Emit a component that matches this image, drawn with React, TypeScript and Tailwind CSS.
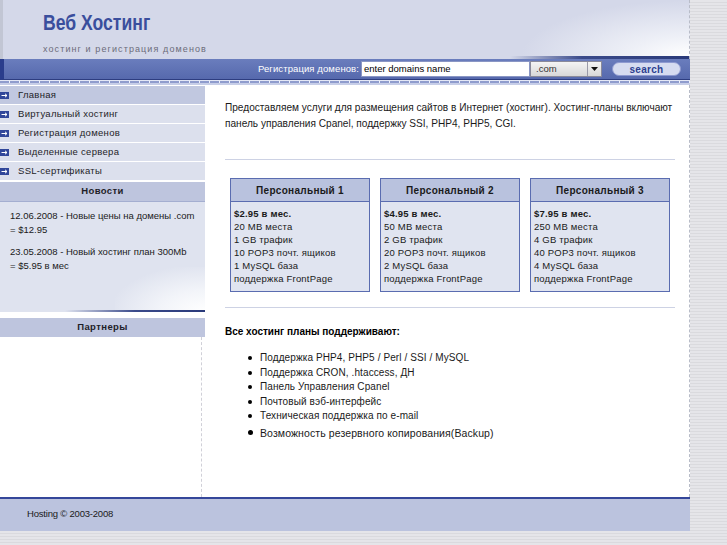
import React from "react";

const menu = ["Главная", "Виртуальный хостинг", "Регистрация доменов", "Выделенные сервера", "SSL-сертификаты"];

const plans = [
    { name: "Персональный 1", price: "$2.95 в мес.", disk: "20 MB места", traffic: "1 GB трафик", pop: "10 POP3 почт. ящиков", db: "1 MySQL база" },
    { name: "Персональный 2", price: "$4.95 в мес.", disk: "50 MB места", traffic: "2 GB трафик", pop: "20 POP3 почт. ящиков", db: "2 MySQL база" },
    { name: "Персональный 3", price: "$7.95 в мес.", disk: "250 MB места", traffic: "4 GB трафик", pop: "40 POP3 почт. ящиков", db: "4 MySQL база" },
];

const features = [
    "Поддержка PHP4, PHP5 / Perl / SSI / MySQL",
    "Поддержка CRON, .htaccess, ДН",
    "Панель Управления Cpanel",
    "Почтовый вэб-интерфейс",
    "Техническая поддержка по e-mail",
];

function MenuArrow() {
    return (
        <svg width="9" height="7" viewBox="0 0 9 7" className="shrink-0">
            <rect width="9" height="7" fill="#31479a"/>
            <path d="M1.5 3.5H7M5 1.8L7 3.5L5 5.2" stroke="#fff" strokeWidth="1" fill="none"/>
        </svg>
    );
}

function App() {
    return (
        <div className="w-[727px] h-[545px] overflow-hidden flex font-['Liberation_Sans',Arial,sans-serif] text-[#1a1a1a] bg-[repeating-linear-gradient(0deg,#e5e5e9_0px,#e5e5e9_2px,#dadade_2px,#dadade_3px)]">
            <div className="w-[690px] flex flex-col">
                {/* Header */}
                <div className="relative h-[59px] bg-[#d4d8e9] border-l-[3px] border-[#c2c6d4] overflow-hidden">
                    <div className="absolute right-0 top-0 w-[170px] h-[59px] bg-[radial-gradient(ellipse_at_100%_95%,#ffffff_0%,#eef0f7_25%,#d4d8e9_70%)]"/>
                    <div className="absolute right-0 bottom-0 w-[180px] h-[3px] bg-[linear-gradient(90deg,#d4d8e9,#3a4a8a_40%,#2a3a7a)]"/>
                    <div className="absolute right-0 top-0 h-[59px] border-r border-dashed border-[#b8bcc8]"/>
                    <div className="relative pl-[40px] pt-[9px]">
                        <div className="inline-block origin-left scale-x-[0.8] text-[22px] font-bold leading-[28px] text-[#3a4e9d]">Веб Хостинг</div>
                        <div className="mt-[6px] text-[9px] leading-[12px] tracking-[1.1px] text-[#6c6c7a]">хостинг и регистрация доменов</div>
                    </div>
                </div>

                {/* Nav bar */}
                <div className="h-[21px] flex items-center bg-[linear-gradient(180deg,#6a7dbd,#5669ad)] border-b border-[#2d3d80] border-l-[4px] border-l-[#2a3d8c]">
                    <div className="flex-1 text-right pr-[2px] text-[9.5px] tracking-[0.1px] text-white">Регистрация доменов:</div>
                    <div className="w-[169px] h-[16px] bg-white border border-[#8a96c4] flex items-center pl-[2px] text-[9.5px] text-black">enter domains name</div>
                    <div className="w-[72px] h-[16px] flex bg-[linear-gradient(180deg,#f4f4f4,#d8d8d8)] border border-[#8a8a9a]">
                        <div className="flex-1 flex items-center pl-[5px] text-[9.5px] text-[#333]">.com</div>
                        <div className="w-[14px] border-l border-[#9a9aa8] flex items-center justify-center">
                            <svg width="7" height="4" viewBox="0 0 7 4"><path d="M0 0H7L3.5 4Z" fill="#111"/></svg>
                        </div>
                    </div>
                    <div className="ml-[10px] mr-[9px] w-[69px] h-[14px] rounded-full bg-[#d6dcf0] border border-[#8e9ad0] flex items-center justify-center text-[10px] font-bold tracking-[0.3px] text-[#2c3f8f]">search</div>
                </div>
                <div className="h-[5px] bg-[#cdd3ea] flex flex-col">
                    <div className="h-[1px] bg-[#e4e8f6]"/>
                    <div className="h-[2px] bg-[repeating-linear-gradient(90deg,#8f9ccd_0px,#8f9ccd_9px,#eef1fa_9px,#eef1fa_10px)]"/>
                    <div className="h-[2px] bg-[#c7cee8]"/>
                </div>

                {/* Body */}
                <div className="h-[412px] flex bg-white">
                    {/* Sidebar */}
                    <div className="w-[205px] shrink-0 flex flex-col">
                        <div className="mt-[1px] flex flex-col">
                            {menu.map((m, i) => (
                                <div key={m} className={`h-[19px] flex items-center gap-[9px] border-b border-white ${i === 0 ? "bg-[#c1c8e0]" : "bg-[#dce0ed]"}`}>
                                    <MenuArrow/>
                                    <span className="text-[9.5px] tracking-[0.3px] text-[#1e1e28]">{m}</span>
                                </div>
                            ))}
                        </div>
                        <div className="mt-[1px] h-[20px] bg-[#bec5de] border-b border-[#a4aed0] flex items-center justify-center text-[9.5px] font-bold tracking-[0.4px] text-[#1e1e28]">Новости</div>
                        <div className="relative h-[110px] bg-[#dfe3ef] pl-[10px] pt-[7px] text-[9.5px] leading-[14px] whitespace-nowrap overflow-hidden">
                            <div className="absolute right-0 bottom-0 w-[90px] h-[45px] bg-[radial-gradient(ellipse_at_100%_100%,#ffffff_0%,#f2f4f9_35%,#dfe3ef_75%)]"/>
                            <div className="absolute right-0 bottom-0 w-[140px] h-[2px] bg-[linear-gradient(90deg,#dfe3ef,#3a4a8a_50%,#2a3a7a)]"/>
                            <p className="relative mb-[8px]">12.06.2008 - Новые цены на домены .com<br/>= $12.95</p>
                            <p className="relative">23.05.2008 - Новый хостинг план 300Mb<br/>= $5.95 в мес</p>
                        </div>
                        <div className="h-[6px] bg-white"/>
                        <div className="h-[19px] bg-[#bec5de] flex items-center justify-center text-[9.5px] font-bold tracking-[0.4px] text-[#1e1e28]">Партнеры</div>
                        <div className="flex-1 border-r border-dashed border-[#d0d0d8] mr-[3px]"/>
                    </div>

                    {/* Main */}
                    <div className="flex-1 min-w-0 pl-[20px] pr-[14px] pt-[15px] border-r border-dashed border-[#b8bcc8]">
                        <p className="text-[10.1px] leading-[16px] whitespace-nowrap text-[#1a1a1a]">
                            Предоставляем услуги для размещения сайтов в Интернет (хостинг). Хостинг-планы включают<br/>
                            панель управления Cpanel, поддержку SSI, PHP4, PHP5, CGI.
                        </p>
                        <div className="mt-[27px] h-[1px] bg-[#cdd2e4]"/>

                        <div className="mt-[18px] mx-[5px] grid grid-cols-3 gap-[10px]">
                            {plans.map(p => (
                                <div key={p.name} className="border border-[#5a6cb0] bg-[#e0e4f0]">
                                    <div className="h-[23px] bg-[#b9c2de] border-b border-[#5a6cb0] flex items-center justify-center text-[10px] font-bold tracking-[0.3px] text-[#1a1a1a]">{p.name}</div>
                                    <div className="pl-[3px] pt-[5px] pb-[6px] text-[9.5px] leading-[13px] tracking-[0.2px] text-[#1a1a1a]">
                                        <div className="font-bold">{p.price}</div>
                                        <div>{p.disk}</div>
                                        <div>{p.traffic}</div>
                                        <div>{p.pop}</div>
                                        <div>{p.db}</div>
                                        <div>поддержка FrontPage</div>
                                    </div>
                                </div>
                            ))}
                        </div>

                        <div className="mt-[15px] h-[1px] bg-[#cdd2e4]"/>

                        <div className="mt-[17px] text-[10px] leading-[14px] font-bold text-black">Все хостинг планы поддерживают:</div>

                        <ul className="mt-[12px] pl-[23px] text-[10px] leading-[14.5px] tracking-[0.1px] text-[#1a1a1a]">
                            {features.map(f => (
                                <li key={f} className="flex items-center gap-[8px]">
                                    <span className="w-[4px] h-[4px] rounded-full bg-black shrink-0"/>
                                    <span>{f}</span>
                                </li>
                            ))}
                            <li className="flex items-center gap-[7px] mt-[2px] text-[10.5px]">
                                <span className="w-[5px] h-[5px] rounded-full bg-black shrink-0"/>
                                <span>Возможность резервного копирования(Backup)</span>
                            </li>
                        </ul>
                    </div>
                </div>

                {/* Footer */}
                <div className="h-[34px] border-t-2 border-[#34479a] bg-[#bbc3de] flex items-center pl-[27px] pb-[1px]">
                    <span className="text-[9.5px] tracking-[-0.2px] text-[#1a1a1a]">Hosting © 2003-2008</span>
                </div>
            </div>
        </div>
    );
}

export default App;
